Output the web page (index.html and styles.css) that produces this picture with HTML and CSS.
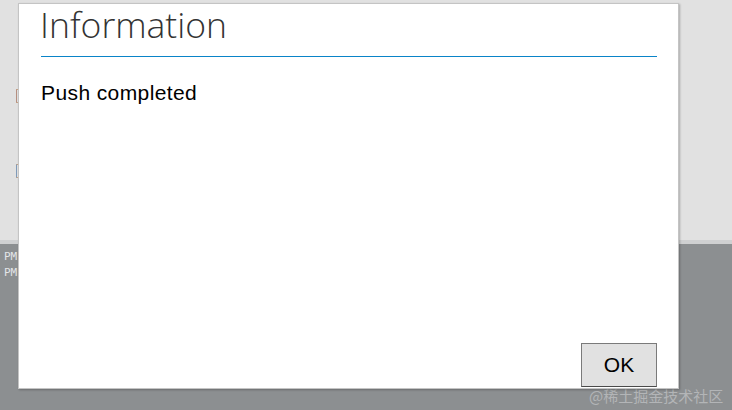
FILE: index.html
```html
<!DOCTYPE html>
<html>
<head>
<title>Information</title>
<link rel="stylesheet" href="styles.css">
</head>
<body>
<div class="editor">
	<div class="gutter">
		<span class="mark mark-a"></span>
		<span class="mark mark-b"></span>
	</div>
</div>
<div class="split"></div>
<div class="console">
	<div class="line">PM</div>
	<div class="line">PM</div>
</div>
<div class="watermark">@稀土掘金技术社区</div>

<div class="dialog">
	<div class="title">Information</div>
	<div class="rule"></div>
	<div class="message">Push completed</div>
	<div class="buttons">
		<button class="ok">OK</button>
	</div>
</div>
</body>
</html>
```

FILE: styles.css
```css
body{
	margin: 0;
	width: 732px;
	height: 410px;
	overflow: hidden;
	background-color: #8c8f91;
	font-family: "Liberation Sans", Arial, sans-serif;
}
.editor{
	height: 240px;
	background-color: #e1e1e1;
}
.gutter{
	width: 16px;
	height: 240px;
	display: flex;
	flex-direction: column;
	align-items: flex-end;
}
.mark{
	display: block;
	width: 2px;
	height: 12px;
	margin-right: -3px;
	border-top: 1px solid #c8a68a;
	border-bottom: 1px solid #c8a68a;
	border-left: 1px solid #b58f80;
}
.mark-a{
	margin-top: 89px;
}
.mark-b{
	margin-top: 61px;
	border-left-color: #7f9ab8;
}
.split{
	height: 4px;
	background-color: #cfd0d1;
}
.console{
	padding: 5px 0 0 4px;
	font-family: "DejaVu Sans Mono", monospace;
	font-size: 11px;
	line-height: 16px;
	color: #e4e6e8;
}
.watermark{
	position: absolute;
	left: 589px;
	top: 386px;
	font-family: "Noto Sans CJK SC", sans-serif;
	font-size: 15px;
	line-height: 20px;
	color: #b3b5b7;
	white-space: nowrap;
}
.dialog{
	position: absolute;
	left: 18px;
	top: 3px;
	width: 661px;
	height: 386px;
	box-sizing: border-box;
	background-color: #ffffff;
	border: 1px solid #c4c4c4;
	box-shadow: 1px 1px 2px rgba(0,0,0,0.25);
	display: flex;
	flex-direction: column;
	padding: 0 21px 0 22px;
}
.title{
	font-family: "Open Sans", sans-serif;
	font-weight: 300;
	font-size: 35.5px;
	line-height: 40px;
	color: #333333;
	margin-left: -1px;
	white-space: nowrap;
}
.rule{
	height: 1px;
	background-color: #0a84c8;
	margin-top: 12px;
}
.message{
	font-size: 21px;
	line-height: 24px;
	letter-spacing: 0.4px;
	color: #000000;
	margin-top: 24px;
}
.buttons{
	margin-top: auto;
	display: flex;
	justify-content: flex-end;
	padding-bottom: 1px;
}
.ok{
	width: 76px;
	height: 44px;
	background-color: #e1e1e1;
	border: 1px solid #7a7a7a;
	border-bottom-color: #4a4a4a;
	font-family: "Liberation Sans", Arial, sans-serif;
	font-size: 21px;
	color: #000000;
	padding: 0;
}
```
